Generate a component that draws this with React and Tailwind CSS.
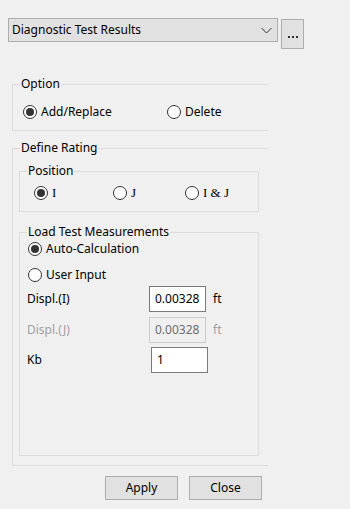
import React from 'react';

// Radio button drawn like the Windows 10 classic control
const Radio = ({ checked }) => (
  <span className="w-[14px] h-[14px] rounded-full border border-[#333333] bg-white flex items-center justify-center shrink-0">
    {checked && <span className="w-[8px] h-[8px] rounded-full bg-[#333333]" />}
  </span>
);

const RadioItem = ({ checked, label, className = '', labelClass = '' }) => (
  <div className={`flex items-center ${className}`}>
    <Radio checked={checked} />
    <span className={`ml-[4px] leading-[16px] ${labelClass}`}>{label}</span>
  </div>
);

// Group box with the caption sitting on the top line
const GroupBox = ({ title, className = '', children }) => (
  <div className={`relative ${className}`}>
    <span className="absolute -top-[9px] left-[7px] px-[1px] bg-[#f0f0f0] leading-[16px]">{title}</span>
    {children}
  </div>
);

const TextBox = ({ value, disabled, className = '' }) => (
  <div
    className={`h-[26px] w-[57px] flex items-center px-[5px] border ${
      disabled ? 'border-[#cccccc] bg-[#f0f0f0] text-[#6d6d6d]' : 'border-[#7a7a7a] bg-white text-black'
    } ${className}`}
  >
    {value}
  </div>
);

export default function App() {
  return (
    <div className="w-[350px] h-[509px] bg-[#f0f0f0] flex flex-col pt-[18px] text-[12px] text-black font-['Noto_Sans',sans-serif] overflow-hidden">
      {/* combo + browse button */}
      <div className="flex items-start pl-[8px]">
        <div className="w-[270px] h-[24px] bg-[#e1e1e1] border border-[#adadad] flex items-center justify-between pl-[3px] pr-[4px]">
          <span className="leading-[16px]">Diagnostic Test Results</span>
          <svg width="11" height="7" viewBox="0 0 11 7" className="mr-[1px]">
            <path d="M0.5 1 L5.5 6 L10.5 1" fill="none" stroke="#333" strokeWidth="1" />
          </svg>
        </div>
        <div className="ml-[3px] mt-[1px] w-[23px] h-[30px] bg-[#e1e1e1] border border-[#adadad] flex items-end justify-center pb-[10px] gap-[2px]">
          <span className="w-[2px] h-[2px] bg-[#333]" />
          <span className="w-[2px] h-[2px] bg-[#333]" />
          <span className="w-[2px] h-[2px] bg-[#333]" />
        </div>
      </div>

      {/* Option */}
      <GroupBox title="Option" className="mt-[35px] ml-[12px] w-[256px] h-[47px] border-t border-l border-b border-[#dcdcdc]">
        <div className="flex items-center mt-[20px] pl-[10px] h-[14px]">
          <RadioItem checked label="Add/Replace" className="w-[144px]" />
          <RadioItem label="Delete" />
        </div>
      </GroupBox>

      {/* Define Rating */}
      <GroupBox title="Define Rating" className="mt-[17px] ml-[12px] w-[256px] h-[318px] border-t border-l border-b border-[#dcdcdc] flex flex-col">
        <GroupBox title="Position" className="mt-[22px] ml-[6px] w-[240px] h-[41px] border border-[#dcdcdc]">
          <div className="flex items-center mt-[14px] pl-[14px] h-[14px] font-['Liberation_Serif',serif] text-[13px]">
            <RadioItem checked label="I" className="w-[79px]" labelClass="ml-[3px]" />
            <RadioItem label="J" className="w-[72px]" labelClass="ml-[3px]" />
            <RadioItem label="I & J" labelClass="ml-[3px]" />
          </div>
        </GroupBox>

        <GroupBox title="Load Test Measurements" className="mt-[20px] ml-[6px] w-[240px] h-[224px] border border-[#dcdcdc] flex flex-col">
          <RadioItem checked label="Auto-Calculation" className="mt-[8px] pl-[8px] h-[16px]" />
          <RadioItem label="User Input" className="mt-[10px] pl-[8px] h-[16px]" />

          <div className="flex items-center mt-[3px] pl-[7px]">
            <span className="w-[122px]">Displ.(I)</span>
            <TextBox value="0.00328" />
            <span className="ml-[7px]">ft</span>
          </div>
          <div className="flex items-center mt-[5px] pl-[7px] text-[#a0a0a0]">
            <span className="w-[122px]">Displ.(J)</span>
            <TextBox value="0.00328" disabled className="h-[25px]" />
            <span className="ml-[7px]">ft</span>
          </div>
          <div className="flex items-center mt-[4px] pl-[7px]">
            <span className="w-[124px]">Kb</span>
            <TextBox value="1" />
          </div>
        </GroupBox>
      </GroupBox>

      {/* buttons */}
      <div className="flex mt-[10px] pl-[105px] gap-[11px]">
        <button className="w-[73px] h-[24px] bg-[#e1e1e1] border border-[#adadad] leading-[16px]">Apply</button>
        <button className="w-[73px] h-[24px] bg-[#e1e1e1] border border-[#adadad] leading-[16px]">Close</button>
      </div>
    </div>
  );
}
